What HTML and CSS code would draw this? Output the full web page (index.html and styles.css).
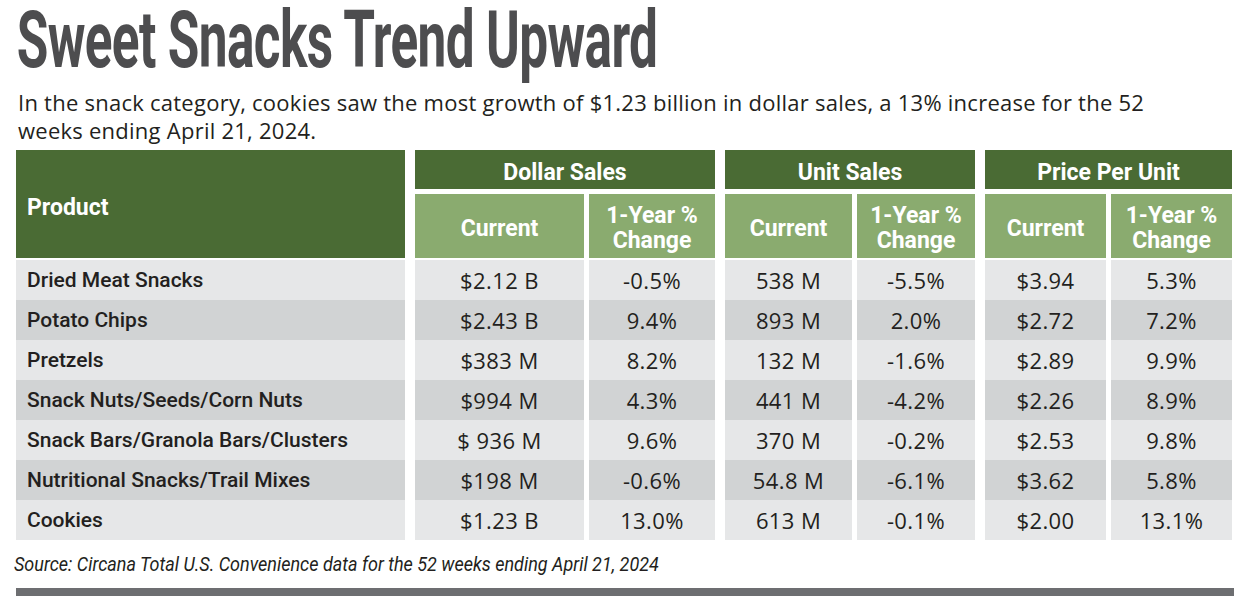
FILE: index.html
```html
<!DOCTYPE html>
<html lang="en">
<head>
<meta charset="utf-8">
<title>Sweet Snacks Trend Upward</title>
<link rel="stylesheet" href="styles.css">
</head>
<body>
<div class="page">
  <h1 class="title"><span class="title-text">Sweet Snacks Trend Upward</span></h1>
  <p class="intro">In the snack category, cookies saw the most growth of $1.23 billion in dollar sales, a 13% increase for the 52<br>weeks ending April 21, 2024.</p>

  <div class="table">
    <div class="head">
      <div class="prod-head">Product</div>
      <div class="group g-dollar">
        <div class="group-title">Dollar Sales</div>
        <div class="sub">
          <div class="sub-cell cur">Current</div>
          <div class="sub-cell chg">1-Year %<br>Change</div>
        </div>
      </div>
      <div class="group g-unit">
        <div class="group-title">Unit Sales</div>
        <div class="sub">
          <div class="sub-cell cur">Current</div>
          <div class="sub-cell chg">1-Year %<br>Change</div>
        </div>
      </div>
      <div class="group g-price">
        <div class="group-title">Price Per Unit</div>
        <div class="sub">
          <div class="sub-cell cur">Current</div>
          <div class="sub-cell chg">1-Year %<br>Change</div>
        </div>
      </div>
    </div>

    <div class="row light">
      <div class="name">Dried Meat Snacks</div>
      <div class="group g-dollar"><div class="val cur">$2.12 B</div><div class="val chg">-0.5%</div></div>
      <div class="group g-unit"><div class="val cur">538 M</div><div class="val chg">-5.5%</div></div>
      <div class="group g-price"><div class="val cur">$3.94</div><div class="val chg">5.3%</div></div>
    </div>
    <div class="row dark">
      <div class="name">Potato Chips</div>
      <div class="group g-dollar"><div class="val cur">$2.43 B</div><div class="val chg">9.4%</div></div>
      <div class="group g-unit"><div class="val cur">893 M</div><div class="val chg">2.0%</div></div>
      <div class="group g-price"><div class="val cur">$2.72</div><div class="val chg">7.2%</div></div>
    </div>
    <div class="row light">
      <div class="name">Pretzels</div>
      <div class="group g-dollar"><div class="val cur">$383 M</div><div class="val chg">8.2%</div></div>
      <div class="group g-unit"><div class="val cur">132 M</div><div class="val chg">-1.6%</div></div>
      <div class="group g-price"><div class="val cur">$2.89</div><div class="val chg">9.9%</div></div>
    </div>
    <div class="row dark">
      <div class="name">Snack Nuts/Seeds/Corn Nuts</div>
      <div class="group g-dollar"><div class="val cur">$994 M</div><div class="val chg">4.3%</div></div>
      <div class="group g-unit"><div class="val cur">441 M</div><div class="val chg">-4.2%</div></div>
      <div class="group g-price"><div class="val cur">$2.26</div><div class="val chg">8.9%</div></div>
    </div>
    <div class="row light">
      <div class="name">Snack Bars/Granola Bars/Clusters</div>
      <div class="group g-dollar"><div class="val cur">$ 936 M</div><div class="val chg">9.6%</div></div>
      <div class="group g-unit"><div class="val cur">370 M</div><div class="val chg">-0.2%</div></div>
      <div class="group g-price"><div class="val cur">$2.53</div><div class="val chg">9.8%</div></div>
    </div>
    <div class="row dark">
      <div class="name">Nutritional Snacks/Trail Mixes</div>
      <div class="group g-dollar"><div class="val cur">$198 M</div><div class="val chg">-0.6%</div></div>
      <div class="group g-unit"><div class="val cur">54.8 M</div><div class="val chg">-6.1%</div></div>
      <div class="group g-price"><div class="val cur">$3.62</div><div class="val chg">5.8%</div></div>
    </div>
    <div class="row light">
      <div class="name">Cookies</div>
      <div class="group g-dollar"><div class="val cur">$1.23 B</div><div class="val chg">13.0%</div></div>
      <div class="group g-unit"><div class="val cur">613 M</div><div class="val chg">-0.1%</div></div>
      <div class="group g-price"><div class="val cur">$2.00</div><div class="val chg">13.1%</div></div>
    </div>
  </div>

  <p class="source"><span class="source-text">Source: Circana Total U.S. Convenience data for the 52 weeks ending April 21, 2024</span></p>
  <div class="rule"></div>
</div>
</body>
</html>
```

FILE: styles.css
```css
html, body {
  margin: 0;
  padding: 0;
  background: #ffffff;
}

.page {
  padding: 0 0 0 16px;
  width: 1216px;
  font-family: "Open Sans", "Lato", "Liberation Sans", sans-serif;
  color: #231f20;
}

.title {
  margin: 0;
  height: 88px;
  font-family: "Roboto", "Liberation Sans", sans-serif;
  font-weight: 700;
  font-size: 80px;
  line-height: 80px;
  color: #4d4d4f;
}

.title-text {
  display: inline-block;
  padding-bottom: 8px;
  letter-spacing: -1px;
  white-space: nowrap;
  transform: scaleX(0.642);
  transform-origin: 2px 0;
}

.intro {
  margin: 0 0 0 2px;
  font-size: 22px;
  line-height: 28px;
  letter-spacing: 0.25px;
  color: #231f20;
}

.table {
  margin-top: 6px;
  width: 1216px;
}

.head {
  display: flex;
  gap: 10px;
  margin-bottom: 2px;
}

.prod-head {
  width: 389px;
  height: 108px;
  flex: none;
  box-sizing: border-box;
  padding: 6px 0 0 11px;
  display: flex;
  align-items: center;
  background: #4a6b34;
  color: #ffffff;
  font-family: "Roboto", sans-serif;
  font-weight: 700;
  font-size: 23px;
}

.group {
  display: flex;
  flex-direction: column;
  flex: none;
}

.head .group {
  gap: 5px;
}

.g-dollar { width: 300px; }
.g-unit { width: 250px; }
.g-price { width: 247px; }

.group-title {
  height: 39px;
  box-sizing: border-box;
  padding-top: 6px;
  display: flex;
  align-items: center;
  justify-content: center;
  background: #4a6b34;
  color: #ffffff;
  font-family: "Roboto", sans-serif;
  font-weight: 700;
  font-size: 23px;
}

.sub {
  display: flex;
  gap: 5px;
  height: 64px;
}

.sub-cell {
  box-sizing: border-box;
  padding-top: 4px;
  display: flex;
  align-items: center;
  justify-content: center;
  text-align: center;
  background: #8aab6f;
  color: #ffffff;
  font-family: "Roboto", sans-serif;
  font-weight: 700;
  font-size: 23px;
  line-height: 25px;
}

.g-dollar .cur { width: 169px; }
.g-dollar .chg { width: 126px; }
.g-unit .cur { width: 127px; }
.g-unit .chg { width: 118px; }
.g-price .cur { width: 121px; }
.g-price .chg { width: 121px; }

.row {
  display: flex;
  gap: 10px;
  height: 40px;
}

.row .group {
  flex-direction: row;
  gap: 5px;
}

.name {
  width: 389px;
  flex: none;
  box-sizing: border-box;
  padding-left: 11px;
  display: flex;
  align-items: center;
  font-family: "Roboto", sans-serif;
  font-weight: 500;
  font-size: 21px;
  color: #231f20;
}

.val {
  display: flex;
  align-items: center;
  justify-content: center;
  font-size: 22px;
  letter-spacing: 0.4px;
  color: #231f20;
}

.light .name, .light .val { background: #e6e7e8; }
.dark .name, .dark .val { background: #d1d3d4; }

.source {
  margin: 10px 0 0 -2px;
  font-family: "Roboto", sans-serif;
  font-style: italic;
  font-size: 20px;
  line-height: 28px;
  color: #231f20;
}

.source-text {
  display: inline-block;
  white-space: nowrap;
  transform: scaleX(0.9);
  transform-origin: 0 0;
}

.rule {
  margin-top: 10px;
  width: 1218px;
  height: 8px;
  background: #6d6e71;
}
```
